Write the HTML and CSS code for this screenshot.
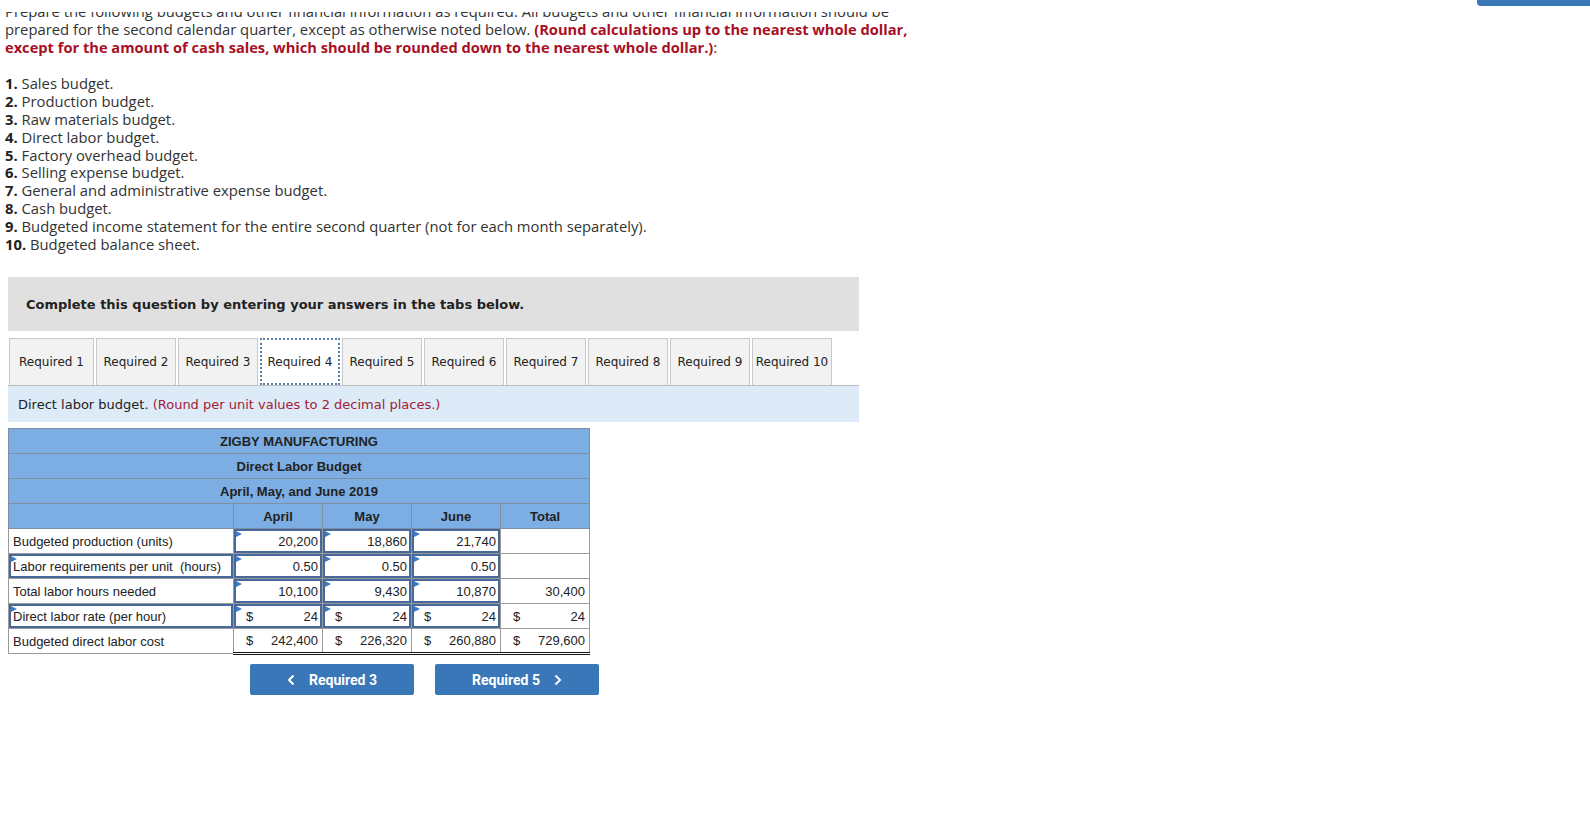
FILE: index.html
```html
<!DOCTYPE html>
<html>
<head>
<meta charset="utf-8">
<title>Direct labor budget</title>
<link rel="stylesheet" href="styles.css">
</head>
<body>
<div class="topcover"><div class="topbtn"></div></div>

<div class="intro">
  <p class="para">Prepare the following budgets and other financial information as required. All budgets and other financial information should be<br>
  prepared for the second calendar quarter, except as otherwise noted below. <b class="red">(Round calculations up to the nearest whole dollar,<br>
  except for the amount of cash sales, which should be rounded down to the nearest whole dollar.)</b>:</p>
  <ol class="list">
    <li><b>1.</b> Sales budget.</li>
    <li><b>2.</b> Production budget.</li>
    <li><b>3.</b> Raw materials budget.</li>
    <li><b>4.</b> Direct labor budget.</li>
    <li><b>5.</b> Factory overhead budget.</li>
    <li><b>6.</b> Selling expense budget.</li>
    <li><b>7.</b> General and administrative expense budget.</li>
    <li><b>8.</b> Cash budget.</li>
    <li><b>9.</b> Budgeted income statement for the entire second quarter (not for each month separately).</li>
    <li><b>10.</b> Budgeted balance sheet.</li>
  </ol>
</div>

<div class="question">
  <div class="banner">Complete this question by entering your answers in the tabs below.</div>

  <div class="tabs">
    <div class="tab first">Required 1</div>
    <div class="tab">Required 2</div>
    <div class="tab">Required 3</div>
    <div class="tab active">Required 4</div>
    <div class="tab">Required 5</div>
    <div class="tab">Required 6</div>
    <div class="tab">Required 7</div>
    <div class="tab">Required 8</div>
    <div class="tab">Required 9</div>
    <div class="tab">Required 10</div>
  </div>

  <div class="infobar">Direct labor budget. <span class="red2">(Round per unit values to 2 decimal places.)</span></div>

  <table class="budget">
    <colgroup>
      <col class="c-label"><col class="c-val"><col class="c-val"><col class="c-val"><col class="c-val">
    </colgroup>
    <tr class="head"><td colspan="5">ZIGBY MANUFACTURING</td></tr>
    <tr class="head"><td colspan="5">Direct Labor Budget</td></tr>
    <tr class="head"><td colspan="5">April, May, and June 2019</td></tr>
    <tr class="head cols"><td></td><td>April</td><td>May</td><td>June</td><td>Total</td></tr>

    <tr>
      <td class="label">Budgeted production (units)</td>
      <td class="num inp">20,200</td>
      <td class="num inp">18,860</td>
      <td class="num inp">21,740</td>
      <td class="num"></td>
    </tr>
    <tr>
      <td class="label inp">Labor requirements per unit&nbsp; (hours)</td>
      <td class="num inp">0.50</td>
      <td class="num inp">0.50</td>
      <td class="num inp">0.50</td>
      <td class="num"></td>
    </tr>
    <tr class="sub">
      <td class="label">Total labor hours needed</td>
      <td class="num inp">10,100</td>
      <td class="num inp">9,430</td>
      <td class="num inp">10,870</td>
      <td class="num">30,400</td>
    </tr>
    <tr>
      <td class="label inp">Direct labor rate (per hour)</td>
      <td class="num inp"><div class="money"><span>$</span><span>24</span></div></td>
      <td class="num inp"><div class="money"><span>$</span><span>24</span></div></td>
      <td class="num inp"><div class="money"><span>$</span><span>24</span></div></td>
      <td class="num"><div class="money"><span>$</span><span>24</span></div></td>
    </tr>
    <tr class="sub final">
      <td class="label">Budgeted direct labor cost</td>
      <td class="num"><div class="money"><span>$</span><span>242,400</span></div></td>
      <td class="num"><div class="money"><span>$</span><span>226,320</span></div></td>
      <td class="num"><div class="money"><span>$</span><span>260,880</span></div></td>
      <td class="num"><div class="money"><span>$</span><span>729,600</span></div></td>
    </tr>
  </table>

  <div class="navbtns">
    <button class="navbtn"><svg class="chev" viewBox="0 0 8 12" width="8" height="12"><path d="M6.5 1.5 L2 6 L6.5 10.5" fill="none" stroke="#fff" stroke-width="2"/></svg><span>Required 3</span></button>
    <button class="navbtn"><span>Required 5</span><svg class="chev" viewBox="0 0 8 12" width="8" height="12"><path d="M1.5 1.5 L6 6 L1.5 10.5" fill="none" stroke="#fff" stroke-width="2"/></svg></button>
  </div>
</div>
</body>
</html>
```

FILE: styles.css
```css
* { box-sizing: border-box; }
html, body { margin: 0; padding: 0; background: #fff; }
body { font-family: "Open Sans", "Lato", sans-serif; color: #333; }

.topcover {
  position: fixed; top: 0; left: 0; right: 0; height: 12px;
  background: #fff; z-index: 5;
}
.topbtn {
  position: absolute; top: 0; right: 0; width: 113px; height: 6px;
  background: #3b78b9; border-bottom-left-radius: 4px;
}

.intro { padding: 3px 0 0 5px; font-size: 14.8px; line-height: 17.8px; }
.para { margin: 0; }
.red { color: #a80f24; font-size: 14.65px; }
.list { list-style: none; margin: 19px 0 0 0; padding: 0; }
.list b { color: #222; }

.question { margin: 24px 0 0 8px; width: 851px; }
.banner {
  background: #e0e0e0; height: 54px; padding-left: 18px;
  display: flex; align-items: center;
  font-family: "DejaVu Sans", Verdana, sans-serif; font-weight: bold; font-size: 13px; color: #222;
}

.tabs { display: flex; gap: 2px; margin-top: 7px; padding-left: 1px; border-bottom: 1px solid #bcbcbc; }
.tab {
  width: 80px; height: 47px; display: flex; align-items: center; justify-content: center;
  background: #f2f2f2; border: 1px solid #c8c8c8; border-bottom: none; white-space: nowrap;
  font-family: "DejaVu Sans", Verdana, sans-serif; font-size: 12px; color: #222;
}
.tab.first { width: 85px; }
.tab.active { background: #fff; border: 2px dotted #5a7fa8; }

.infobar {
  background: #dcebf7; height: 36px; padding-left: 10px;
  display: flex; align-items: center; white-space: pre;
  font-family: "DejaVu Sans", Verdana, sans-serif; font-size: 13px; color: #222;
}
.red2 { color: #a3203a; }

.budget {
  margin-top: 6px; border-collapse: collapse; width: 581px; table-layout: fixed;
  font-family: "Liberation Sans", Arial, sans-serif; font-size: 13px; color: #222;
}
.c-label { width: 225px; }
.c-val { width: 89px; }
.budget td { border: 1px solid #9a9a9a; height: 25px; padding: 0 4px; }
.head td { background: #7caee3; text-align: center; font-weight: bold; border-color: #7f8fa3; }
.label { text-align: left; padding-left: 4px; }
.num { text-align: right; }
.inp { position: relative; box-shadow: inset 0 0 0 2px #46699a; padding-right: 5px; }
.inp::before {
  content: ""; position: absolute; top: 2px; left: 2px;
  border-style: solid; border-width: 3.5px 0 3.5px 6px;
  border-color: transparent transparent transparent #3d7ac8;
}
.money { display: flex; justify-content: space-between; padding-left: 8px; }
.sub td.num { border-top: 1px solid #111; }
.final td.num { border-bottom: 3px double #111; }

.navbtns { display: flex; gap: 21px; margin: 9px 0 0 242px; }
.navbtn {
  width: 164px; height: 31px; background: #3a77b9; border: none; border-radius: 2px;
  color: #fff; font-family: "Roboto", "Liberation Sans", sans-serif; font-weight: bold; font-size: 14px;
  display: flex; align-items: center; justify-content: center; gap: 14px; padding: 0;
}
.chev { display: block; }
```
